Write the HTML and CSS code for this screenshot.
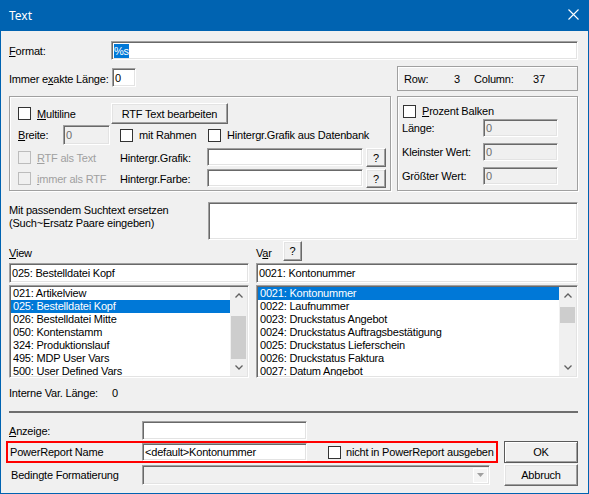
FILE: index.html
```html
<!DOCTYPE html>
<html lang="de">
<head>
    <meta charset="UTF-8">
    <title>Text</title>
    <link rel="stylesheet" href="styles.css">
</head>
<body>
<div class="window">
    <div class="titlebar">
        <span class="title">Text</span>
        <svg class="close" width="11" height="11" viewBox="0 0 11 11">
            <path d="M0.5 0.5L10.5 10.5M10.5 0.5L0.5 10.5" stroke="#fff" stroke-width="1.1" fill="none"/>
        </svg>
    </div>

    <div class="dialog">
        <!-- Format -->
        <div class="row r-format">
            <span class="lbl w-format"><u>F</u>ormat:</span>
            <div class="field fill f-format"><span class="sel">%s</span></div>
        </div>

        <!-- exakte Länge + Row/Column -->
        <div class="row r-exact">
            <span class="lbl w-exact">Immer e<u>x</u>akte Länge:</span>
            <div class="field f-exact">0</div>
            <div class="status">
                <span class="st-row">Row:</span>
                <span class="st-num">3</span>
                <span class="st-col">Column:</span>
                <span>37</span>
            </div>
        </div>

        <!-- Gruppen -->
        <div class="row r-groups">
            <div class="group g-left">
                <div class="gline gl1">
                    <div class="cell c1"><span class="chk"></span><span><u>M</u>ultiline</span></div>
                    <div class="btn b-rtf">RTF Text bearbeiten</div>
                </div>
                <div class="gline gl2">
                    <div class="cell c1">
                        <span class="lbl w-breite"><u>B</u>reite:</span>
                        <div class="field off f-breite">0</div>
                    </div>
                    <div class="cell c2"><span class="chk"></span><span>mit Rahmen</span></div>
                    <div class="cell c3 c3-chk"><span class="chk"></span><span>Hintergr.Grafik aus Datenbank</span></div>
                </div>
                <div class="gline gl3">
                    <div class="cell c1 dim"><span class="chk off"></span><span><u>R</u>TF als Text</span></div>
                    <div class="cell c2">Hintergr.Grafik:</div>
                    <div class="cell c3">
                        <div class="field f-bg"></div>
                        <div class="btn b-q">?</div>
                    </div>
                </div>
                <div class="gline gl4">
                    <div class="cell c1 dim"><span class="chk off"></span><span><u>i</u>mmer als RTF</span></div>
                    <div class="cell c2">Hintergr.Farbe:</div>
                    <div class="cell c3">
                        <div class="field f-bg"></div>
                        <div class="btn b-q">?</div>
                    </div>
                </div>
            </div>

            <div class="group g-right">
                <div class="gline gr1"><span class="chk"></span><span><u>P</u>rozent Balken</span></div>
                <div class="gline gr2">
                    <span class="lbl w-pct">Länge:</span>
                    <div class="field off f-pct">0</div>
                </div>
                <div class="gline gr3">
                    <span class="lbl w-pct">Kleinster Wert:</span>
                    <div class="field off f-pct">0</div>
                </div>
                <div class="gline gr3">
                    <span class="lbl w-pct">Größter Wert:</span>
                    <div class="field off f-pct">0</div>
                </div>
            </div>
        </div>

        <!-- Suchtext -->
        <div class="row r-search">
            <div class="lbl w-search">Mit passendem Suchtext ersetzen<br>(Such~Ersatz Paare eingeben)</div>
            <div class="field fill f-search"></div>
        </div>

        <!-- View / Var -->
        <div class="row r-heads">
            <span class="lbl col-view pad-head"><u>V</u>iew</span>
            <span class="lbl w-var pad-head">V<u>a</u>r</span>
            <div class="btn b-qv">?</div>
        </div>

        <div class="row r-combos">
            <div class="field f-view">025: Bestelldatei Kopf</div>
            <div class="field fill">0021: Kontonummer</div>
        </div>

        <div class="row r-lists">
            <div class="list l-view">
                <div class="items">
                    <div class="item">021: Artikelview</div>
                    <div class="item on">025: Bestelldatei Kopf</div>
                    <div class="item">026: Bestelldatei Mitte</div>
                    <div class="item">050: Kontenstamm</div>
                    <div class="item">324: Produktionslauf</div>
                    <div class="item">495: MDP User Vars</div>
                    <div class="item">500: User Defined Vars</div>
                </div>
                <div class="sb">
                    <div class="sb-btn"><svg width="8" height="5" viewBox="0 0 8 5"><path d="M0.5 4.5L4 1L7.5 4.5" stroke="#606060" stroke-width="1.3" fill="none"/></svg></div>
                    <div class="sb-track"><div class="sb-thumb t-view"></div></div>
                    <div class="sb-btn"><svg width="8" height="5" viewBox="0 0 8 5"><path d="M0.5 0.5L4 4L7.5 0.5" stroke="#606060" stroke-width="1.3" fill="none"/></svg></div>
                </div>
            </div>
            <div class="list fill">
                <div class="items">
                    <div class="item on">0021: Kontonummer</div>
                    <div class="item">0022: Laufnummer</div>
                    <div class="item">0023: Druckstatus Angebot</div>
                    <div class="item">0024: Druckstatus Auftragsbestätigung</div>
                    <div class="item">0025: Druckstatus Lieferschein</div>
                    <div class="item">0026: Druckstatus Faktura</div>
                    <div class="item">0027: Datum Angebot</div>
                </div>
                <div class="sb">
                    <div class="sb-btn"><svg width="8" height="5" viewBox="0 0 8 5"><path d="M0.5 4.5L4 1L7.5 4.5" stroke="#606060" stroke-width="1.3" fill="none"/></svg></div>
                    <div class="sb-track"><div class="sb-thumb t-var"></div></div>
                    <div class="sb-btn"><svg width="8" height="5" viewBox="0 0 8 5"><path d="M0.5 0.5L4 4L7.5 0.5" stroke="#606060" stroke-width="1.3" fill="none"/></svg></div>
                </div>
            </div>
        </div>

        <div class="row r-intern">
            <span class="lbl w-exact">Interne Var. Länge:</span>
            <span>0</span>
        </div>

        <div class="separator"></div>

        <!-- unten -->
        <div class="bottom">
            <div class="bottom-left">
                <div class="row b-anz">
                    <span class="lbl w-anz"><u>A</u>nzeige:</span>
                    <div class="field f-anz"></div>
                </div>
                <div class="row b-pr">
                    <span class="lbl w-pr">PowerReport Name</span>
                    <div class="field f-anz f-pr">&lt;default&gt;Kontonummer</div>
                    <span class="chk pr-chk"></span>
                    <span class="lbl">nicht in PowerReport ausgeben</span>
                </div>
                <div class="row b-bed">
                    <span class="lbl w-bed">Bedingte Formatierung</span>
                    <div class="field off f-bed">
                        <div class="dd"><svg width="7" height="4" viewBox="0 0 7 4"><path d="M0 0H7L3.5 4Z" fill="#a0a0a0"/></svg></div>
                    </div>
                </div>
            </div>
            <div class="bottom-btns">
                <div class="btn b-main default">OK</div>
                <div class="btn b-main b-cancel">Abbruch</div>
            </div>
        </div>
    </div>
</div>
</body>
</html>
```

FILE: styles.css
```css
* {
    margin: 0;
    padding: 0;
    box-sizing: border-box;
}

body {
    font-family: 'Liberation Sans', Arial, sans-serif;
    font-size: 11px;
    letter-spacing: -0.2px;
    color: #000;
    background-color: #f0f0f0;
}

.window {
    width: 589px;
    height: 494px;
    border: 1px solid #0063b1;
    border-top: none;
    background-color: #f0f0f0;
    overflow: hidden;
}

.titlebar {
    height: 31px;
    margin: 0 -1px;
    background-color: #0063b1;
    display: flex;
    align-items: center;
    padding: 0 10px 1px 9px;
}

.title {
    flex: 1;
    font-family: 'Noto Sans', sans-serif;
    font-size: 12px;
    letter-spacing: 0;
    color: #fff;
}

.close {
    margin-bottom: 1px;
}

.dialog {
    padding: 0 10px 0 8px;
}

.row {
    display: flex;
    align-items: center;
}

.lbl {
    flex: none;
    white-space: nowrap;
}

u {
    text-decoration: underline;
    text-underline-offset: 1px;
}

/* Eingabefelder */
.field {
    flex: none;
    height: 19px;
    background-color: #fff;
    border: 1px solid;
    border-color: #a0a0a0 #fff #fff #a0a0a0;
    box-shadow: inset 1px 1px #696969, inset -1px -1px #e3e3e3;
    padding: 0 2px;
    display: flex;
    align-items: center;
    white-space: nowrap;
    overflow: hidden;
}

.field.fill,
.list.fill {
    flex: 1;
}

.field.off {
    background-color: #f0f0f0;
    color: #6d6d6d;
}

.sel {
    background-color: #0078d7;
    color: #fff;
    padding: 1px 0;
}

/* Schaltflächen */
.btn {
    flex: none;
    display: flex;
    align-items: center;
    justify-content: center;
    background-color: #f0f0f0;
    border: 1px solid;
    border-color: #fff #696969 #696969 #fff;
    box-shadow: inset -1px -1px #a0a0a0, inset 1px 1px #e3e3e3;
    white-space: nowrap;
}

.btn.default {
    border-color: #5a5a5a;
    box-shadow: inset 1px 1px #fff, inset -1px -1px #a0a0a0;
}

/* Checkboxen */
.chk {
    flex: none;
    width: 13px;
    height: 13px;
    border: 1px solid #333;
    background-color: #fff;
}

.chk.off {
    border-color: #bcbcbc;
    background-color: #f0f0f0;
}

.dim {
    color: #a0a0a0;
}

/* Zeile 1 */
.r-format {
    margin-top: 10px;
    height: 19px;
}

.w-format {
    width: 102px;
}

/* Zeile 2 */
.r-exact {
    margin-top: 6px;
    height: 25px;
}

.w-exact {
    width: 103px;
}

.f-exact {
    width: 24px;
    align-self: flex-start;
    margin-top: 2px;
}

.status {
    margin-left: auto;
    width: 181px;
    height: 25px;
    border: 1px solid #a0a0a0;
    box-shadow: inset 1px 1px #fff;
    display: flex;
    align-items: center;
    padding-left: 6px;
}

.st-row {
    width: 44px;
}

.st-num {
    width: 12px;
    text-align: right;
}

.st-col {
    margin-left: 14px;
    width: 59px;
}

/* Gruppen */
.r-groups {
    margin-top: 5px;
    height: 95px;
    align-items: stretch;
    gap: 6px;
}

.group {
    border: 1px solid #a0a0a0;
    box-shadow: inset 1px 1px #fff, 1px 1px #fff;
}

.g-left {
    width: 382px;
    padding: 6px 0 0 8px;
}

.g-right {
    width: 181px;
    padding: 7px 0 0 4px;
}

.gline {
    display: flex;
    align-items: center;
}

.cell {
    flex: none;
    display: flex;
    align-items: center;
    gap: 6px;
}

.c1 {
    width: 93px;
}

.c2 {
    width: 96px;
    padding-left: 9px;
}

.c3 {
    gap: 3px;
}

.c3-chk {
    margin-left: 1px;
    gap: 6px;
}

.gl1 {
    height: 21px;
}

.gl2 {
    margin-top: 1px;
    height: 20px;
}

.gl3 {
    margin-top: 3px;
    height: 19px;
}

.gl4 {
    margin-top: 2px;
    height: 19px;
}

.b-rtf {
    width: 117px;
    height: 21px;
}

.c1 .w-breite {
    width: 39px;
}

.f-breite {
    width: 47px;
    height: 20px;
}

.f-bg {
    width: 156px;
    height: 18px;
    align-self: flex-start;
}

.b-q {
    width: 20px;
    height: 19px;
}

.gr1 {
    height: 14px;
    gap: 6px;
    padding-left: 1px;
}

.gr2 {
    margin-top: 1px;
    height: 18px;
}

.gr3 {
    margin-top: 6px;
    height: 18px;
}

.w-pct {
    width: 81px;
}

.f-pct {
    width: 75px;
    height: 18px;
}

/* Suchtext */
.r-search {
    margin-top: 11px;
    height: 38px;
    align-items: flex-start;
}

.w-search {
    width: 199px;
    padding-top: 2px;
    line-height: 13px;
}

.f-search {
    height: 38px;
}

/* View / Var */
.r-heads {
    margin-top: 1px;
    height: 20px;
}

.pad-head {
    padding-top: 4px;
}

.col-view {
    width: 247px;
}

.w-var {
    width: 27px;
}

.b-qv {
    width: 19px;
    height: 20px;
}

.r-combos {
    margin-top: 2px;
    height: 20px;
    gap: 7px;
}

.f-view {
    width: 240px;
}

.r-combos .field {
    height: 20px;
}

/* Listen */
.r-lists {
    margin-top: 2px;
    height: 93px;
    align-items: stretch;
    gap: 7px;
}

.list {
    flex: none;
    display: flex;
    background-color: #fff;
    border: 1px solid;
    border-color: #a0a0a0 #fff #fff #a0a0a0;
    box-shadow: inset 1px 1px #696969, inset -1px -1px #e3e3e3;
    padding: 1px;
}

.l-view {
    width: 240px;
}

.items {
    flex: 1;
    overflow: hidden;
}

.item {
    height: 13px;
    line-height: 13px;
    padding-left: 2px;
    white-space: nowrap;
}

.item.on {
    background-color: #0078d7;
    color: #fff;
}

.sb {
    width: 17px;
    flex: none;
    background-color: #f0f0f0;
    display: flex;
    flex-direction: column;
}

.sb-btn {
    height: 17px;
    display: flex;
    align-items: center;
    justify-content: center;
}

.sb-track {
    flex: 1;
}

.sb-thumb {
    margin: 0 1px;
    background-color: #cdcdcd;
}

.t-view {
    margin-top: 12px;
    height: 43px;
}

.t-var {
    margin-top: 3px;
    height: 16px;
}

/* Interne Länge */
.r-intern {
    margin-top: 8px;
    height: 13px;
}

.separator {
    margin-top: 12px;
    height: 2px;
    background-color: #6e6e6e;
}

/* unten */
.bottom {
    margin-top: 8px;
    display: flex;
}

.bottom-left {
    width: 489px;
}

.b-anz {
    height: 19px;
}

.w-anz {
    width: 133px;
}

.f-anz {
    width: 165px;
}

.b-pr {
    margin-top: 1px;
    margin-left: -3px;
    width: 492px;
    height: 22px;
    border: 2px solid #ff0000;
    padding-left: 2px;
}

.w-pr {
    width: 132px;
}

.f-pr {
    height: 18px;
}

.pr-chk {
    margin-left: 21px;
    margin-right: 5px;
}

.b-bed {
    margin-top: 2px;
    height: 20px;
    padding-left: 2px;
}

.w-bed {
    width: 131px;
}

.f-bed {
    width: 348px;
    height: 20px;
    justify-content: flex-end;
    padding-right: 1px;
}

.dd {
    width: 15px;
    height: 15px;
    border: 1px solid #fff;
    background-color: #f4f4f4;
    display: flex;
    align-items: center;
    justify-content: center;
}

.bottom-btns {
    width: 74px;
    margin-left: 6px;
    padding-top: 20px;
}

.b-main {
    height: 22px;
}

.b-cancel {
    margin-top: 1px;
}
```
